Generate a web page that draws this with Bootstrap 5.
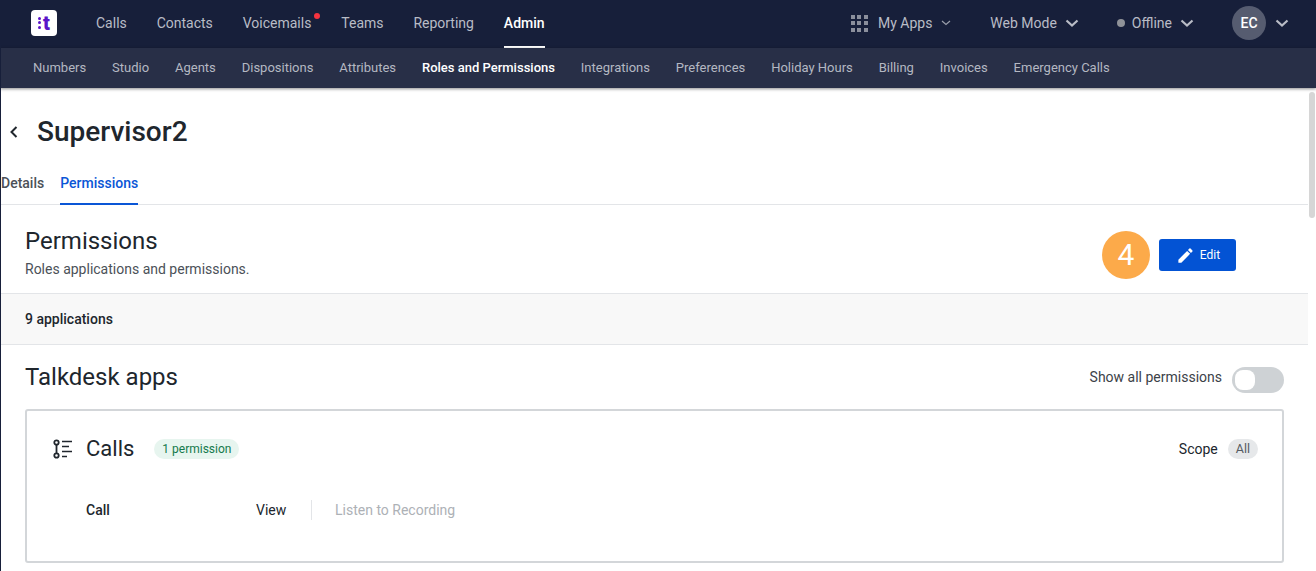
<!doctype html>
<html lang="en"><head><meta charset="utf-8"><title>Supervisor2</title>
<link href="https://cdn.jsdelivr.net/npm/bootstrap@5.3.0/dist/css/bootstrap.min.css" rel="stylesheet">
<style>
html,body{height:100%;overflow:hidden}
body{font-family:Roboto,"Liberation Sans",sans-serif;background:#fff;color:#20262d;border-left:1px solid #171f3a}
.topbar{height:48px;background:#171f3a;margin-left:-1px;padding-left:31px;padding-right:27px}
.logo-box{width:26px;height:26px;background:#fff;border-radius:4px;margin-right:39px;margin-bottom:3px;color:#5a14c8;font-weight:900;font-size:20px;line-height:26px;gap:2px}
.logo-dots{display:grid;gap:1.5px}
.logo-dots i{display:block;width:3px;height:3px;background:#5a14c8;border-radius:50%}
.mainlinks{gap:29.9px;align-self:stretch}
.toplink{color:#b9bcc6;font-size:14px;line-height:46px;height:48px;position:relative;text-decoration:none;display:block}
.toplink.on{color:#fff;font-weight:500}
.toplink.on::after{content:"";position:absolute;left:0;right:0;bottom:0;height:2px;background:#fff}
.reddot{position:absolute;width:6px;height:6px;border-radius:50%;background:#f5333f;right:-9px;top:13px}
.subbar{height:40px;background:#282f47;margin-left:-1px;padding-left:33px;gap:25.9px;box-shadow:0 1px 3px rgba(0,0,0,.45);position:relative}
.sublink{color:#b4b8c2;font-size:13px;text-decoration:none;line-height:40px}
.sublink.on{color:#fff;font-weight:500}
.rightgroup{margin-bottom:2px}
.apps-grid{display:grid;grid-template-columns:repeat(3,4px);gap:2.5px;margin-right:10px}
.apps-grid i{display:block;width:4px;height:4px;background:#8b8f9c}
.offdot{width:8px;height:8px;border-radius:50%;background:#8f9298;margin-right:7px}
.avatar{width:34px;height:34px;border-radius:50%;background:#565c70;color:#fff;font-size:14px;font-weight:500;line-height:34px;text-align:center}
.rightitem{color:#b9bcc6;font-size:14px}
.chev-thin{margin-left:9px;margin-right:39px}
.chev-web{margin-left:8px;margin-right:38px}
.chev-off{margin-left:8px;margin-right:38px}
.chev-user{margin-left:9px}
.page-wrap{width:1307px}
.titlerow{height:88px;padding-left:7px}
.pagetitle{font-size:28px;font-weight:500;margin:0 0 0 19px;color:#20262d;line-height:32px}
.tabrow{height:29px;border-bottom:1px solid #e3e5e8;gap:16px}
.tabitem{font-size:14px;font-weight:500;color:#4b5158;text-decoration:none;height:29px;line-height:15px;display:block}
.tabitem.on{color:#0a56d6;border-bottom:2px solid #0a56d6}
.permhead{height:88px;padding:24px 72px 0 24px}
.h-perm{font-size:24px;font-weight:400;margin:0;line-height:25px;color:#20262d}
.subtext{font-size:14px;color:#4b5158;line-height:16px;margin-top:7px}
.stepdot{width:48px;height:48px;border-radius:50%;background:#fcaa4a;color:#fff;font-size:30px;line-height:48px;text-align:center;margin-right:9px;margin-top:2px}
.editbtn{width:77px;height:32px;margin-top:10px;background:#0353d4;border-radius:3px;color:#fff;font-size:12px;border:0;padding:0 0 0 1px;gap:5px}
.appsbar{height:52px;background:#f8f8f8;border-top:1px solid #e3e5e8;border-bottom:1px solid #e3e5e8;padding-left:24px;font-size:14px;font-weight:500;line-height:50px}
.appshead{padding:0 24px;height:64px}
.h-apps{font-size:24px;font-weight:400;margin:0;color:#20262d}
.showlbl{font-size:14px;color:#3c4248}
.togglebox{width:52px;height:26px;background:#ced2d5;border-radius:13px;padding:2px;margin-left:10px;margin-top:6px}
.togglebox i{display:block;width:20px;height:20px;background:#fff;border-radius:8px;margin-left:1px}
.permcard{margin:0 24px;height:154px;border:2px solid #d3d6d9;border-radius:3px;padding:19px 24px 0 26px}
.callsname{font-size:22px;line-height:38px;margin:0 0 0 13px;font-weight:400}
.pill-green{background:#e7f5ef;color:#157a4c;font-size:12px;border-radius:10px;height:20px;line-height:20px;padding:0 8px;margin-left:20px}
.scope{font-size:14px;color:#20262d}
.pill-all{background:#e6e8ea;color:#555b62;font-size:12.5px;border-radius:10px;height:20px;line-height:20px;padding:0 8px;margin-left:10px}
.permrow{margin-top:32px;font-size:14px;height:20px;padding-left:33px}
.p-name{width:170px;font-weight:500;color:#20262d}
.p-view{width:55px;color:#20262d}
.p-rec{border-left:1px solid #e3e5e8;padding-left:23px;color:#adb1b6;line-height:20px}
.scrollthumb{position:absolute;right:1px;top:92px;width:6px;height:126px;background:#d6d6d6;border-radius:3px}
</style></head>
<body>
<nav class="topbar d-flex align-items-center">
  <div class="logo-box d-flex align-items-center justify-content-center"><span class="logo-dots"><i></i><i></i><i></i></span><span>t</span></div>
  <div class="mainlinks d-flex">
    <a class="toplink" href="#">Calls</a>
    <a class="toplink" href="#">Contacts</a>
    <a class="toplink" href="#">Voicemails<span class="reddot"></span></a>
    <a class="toplink" href="#">Teams</a>
    <a class="toplink" href="#">Reporting</a>
    <a class="toplink on" href="#">Admin</a>
  </div>
  <div class="ms-auto rightgroup d-flex align-items-center">
    <div class="apps-grid"><i></i><i></i><i></i><i></i><i></i><i></i><i></i><i></i><i></i></div>
    <span class="rightitem">My Apps</span>
    <svg class="chev-thin" width="10" height="6" viewBox="0 0 10 6"><path d="M1 1l4 3.5L9 1" fill="none" stroke="#9a9eaa" stroke-width="1.2"/></svg>
    <span class="rightitem">Web Mode</span>
    <svg class="chev-web" width="14" height="9" viewBox="0 0 14 9"><path d="M1.5 1.5L7 6.5l5.5-5" fill="none" stroke="#b9bcc6" stroke-width="2.2"/></svg>
    <span class="offdot"></span><span class="rightitem">Offline</span>
    <svg class="chev-off" width="14" height="9" viewBox="0 0 14 9"><path d="M1.5 1.5L7 6.5l5.5-5" fill="none" stroke="#b9bcc6" stroke-width="2.2"/></svg>
    <div class="avatar">EC</div>
    <svg class="chev-user" width="14" height="9" viewBox="0 0 14 9"><path d="M1.5 1.5L7 6.5l5.5-5" fill="none" stroke="#b9bcc6" stroke-width="2.2"/></svg>
  </div>
</nav>
<div class="subbar d-flex">
  <a class="sublink" href="#">Numbers</a><a class="sublink" href="#">Studio</a><a class="sublink" href="#">Agents</a><a class="sublink" href="#">Dispositions</a><a class="sublink" href="#">Attributes</a><a class="sublink on" href="#">Roles and Permissions</a><a class="sublink" href="#">Integrations</a><a class="sublink" href="#">Preferences</a><a class="sublink" href="#">Holiday Hours</a><a class="sublink" href="#">Billing</a><a class="sublink" href="#">Invoices</a><a class="sublink" href="#">Emergency Calls</a>
</div>
<main class="page-wrap">
  <div class="titlerow d-flex align-items-center">
    <svg width="10" height="12" viewBox="0 0 10 12"><path d="M8.5 1L3.5 6l5 5" fill="none" stroke="#20262d" stroke-width="2"/></svg>
    <h1 class="pagetitle">Supervisor2</h1>
  </div>
  <div class="tabrow d-flex">
    <a class="tabitem" href="#">Details</a>
    <a class="tabitem on" href="#">Permissions</a>
  </div>
  <section class="permhead d-flex justify-content-between">
    <div><h2 class="h-perm">Permissions</h2><div class="subtext">Roles applications and permissions.</div></div>
    <div class="d-flex align-items-start">
      <div class="stepdot">4</div>
      <button class="editbtn d-flex align-items-center justify-content-center" type="button">
        <svg width="19" height="19" viewBox="0 0 24 24"><path fill="#fff" d="M3 17.25V21h3.75L17.81 9.94l-3.75-3.75L3 17.25zM20.71 7.04a1 1 0 0 0 0-1.41l-2.34-2.34a1 1 0 0 0-1.41 0l-1.83 1.83 3.75 3.75 1.83-1.83z"/></svg>
        <span>Edit</span>
      </button>
    </div>
  </section>
  <div class="appsbar">9 applications</div>
  <div class="appshead d-flex align-items-center">
    <h2 class="h-apps">Talkdesk apps</h2>
    <div class="ms-auto d-flex align-items-center"><span class="showlbl">Show all permissions</span><div class="togglebox d-flex align-items-center"><i></i></div></div>
  </div>
  <section class="permcard">
    <div class="d-flex align-items-center">
      <svg width="20" height="20" viewBox="0 0 20 20" fill="none" stroke="#20262d"><circle cx="3.5" cy="3.5" r="2.2" stroke-width="1.8"/><circle cx="3.5" cy="16.5" r="2.2" stroke-width="1.8"/><path stroke-width="1.8" d="M3.5 5.5v8.8"/><path stroke-width="1.7" d="M9 2.5h10M9 7.5h7M9 12.5h10M9 17.5h5"/></svg>
      <h3 class="callsname">Calls</h3>
      <span class="pill-green">1 permission</span>
      <span class="scope ms-auto">Scope</span><span class="pill-all">All</span>
    </div>
    <div class="permrow d-flex align-items-center">
      <div class="p-name">Call</div><div class="p-view">View</div><div class="p-rec">Listen to Recording</div>
    </div>
  </section>
</main>
<div class="scrollthumb"></div>
<script src="https://cdn.jsdelivr.net/npm/bootstrap@5.3.0/dist/js/bootstrap.bundle.min.js"></script>
</body></html>
